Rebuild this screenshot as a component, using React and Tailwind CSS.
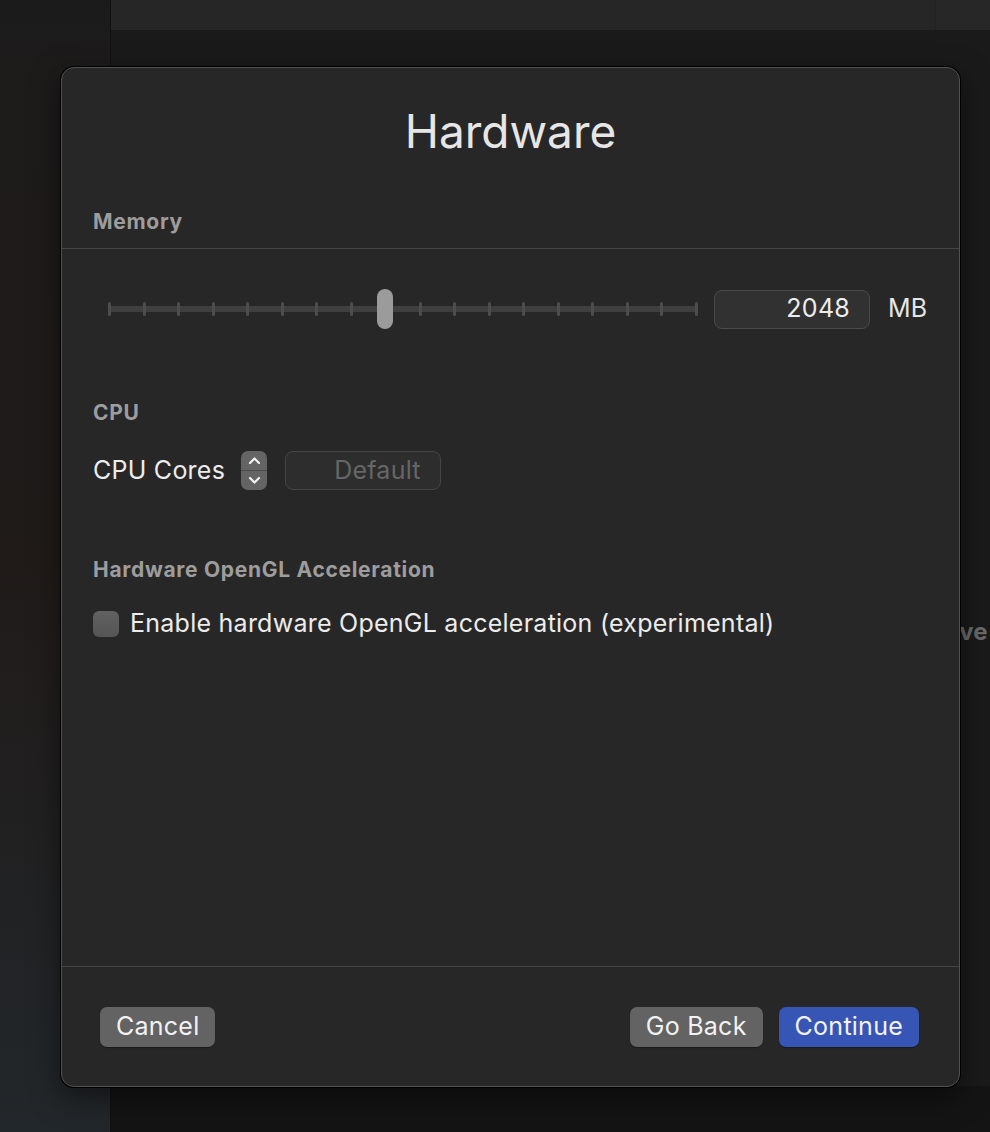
import React from 'react';

const ticks = Array.from({ length: 18 }, (_, i) => i);

const Slider = () => (
  <div className="relative h-[40px] w-[590px]">
    <div className="absolute left-[1px] right-[1px] top-[17px] h-[6px] bg-[#3f3f3f]" />
    <div className="absolute inset-x-0 top-[13px] flex justify-between">
      {ticks.map((t) => (
        <div key={t} className="h-[14px] w-[3px] rounded-full bg-[#4d4d4d]" />
      ))}
    </div>
    <div className="absolute left-[269px] top-0 h-[40px] w-[16px] rounded-full bg-[#9b9b9b]" />
  </div>
);

const Stepper = () => (
  <div className="flex h-[39px] w-[26px] flex-col overflow-hidden rounded-[7px] bg-[#646464]">
    <div className="flex flex-1 items-center justify-center border-b border-[#4c4c4c]">
      <svg width="13" height="9" viewBox="0 0 13 9" fill="none">
        <polyline points="2,7 6.5,2.5 11,7" stroke="#f2f2f2" strokeWidth="2.2" strokeLinecap="round" strokeLinejoin="round" />
      </svg>
    </div>
    <div className="flex flex-1 items-center justify-center">
      <svg width="13" height="9" viewBox="0 0 13 9" fill="none">
        <polyline points="2,2 6.5,6.5 11,2" stroke="#f2f2f2" strokeWidth="2.2" strokeLinecap="round" strokeLinejoin="round" />
      </svg>
    </div>
  </div>
);

const SectionLabel = ({ children, className = '' }) => (
  <div className={`text-[21px] font-bold tracking-[0.7px] text-[#9d9d9d] ${className}`}>{children}</div>
);

const Button = ({ children, primary }) => (
  <button
    className={`flex h-[40px] items-center rounded-[7px] px-[16px] text-[25px] tracking-[0.25px] text-[#f2f2f2] shadow-[0_1px_1px_rgba(0,0,0,0.35)] ${
      primary ? 'bg-[#3755b5]' : 'bg-[#636363]'
    }`}
  >
    {children}
  </button>
);

export default function App() {
  return (
    <div className="relative h-[1132px] w-[990px] overflow-hidden bg-[#1b1a1a] font-['Inter','Liberation_Sans',sans-serif]">
      <div className="flex h-full">
        <div className="h-full w-[111px] shrink-0 border-r border-[#111] bg-gradient-to-b from-[#1c1b1b] via-[#201b19] to-[#22272b]" />
        <div className="flex min-w-0 flex-1 flex-col">
          <div className="flex h-[30px]">
            <div className="flex-1 bg-[#262626]" />
            <div className="w-[55px] border-l border-[#222] bg-[#272727]" />
          </div>
          <div className="flex-1 overflow-hidden bg-[#1b1a1a]">
            <div className="mt-[584px] pl-[819px] text-[24px] font-bold whitespace-nowrap text-[#6a6a6a]">Save</div>
          </div>
          <div className="h-[46px] bg-[#141414]" />
        </div>
      </div>

      <div className="absolute left-[61px] top-[67px] flex h-[1020px] w-[899px] flex-col rounded-[13px] border border-[#525252] bg-[#282727] shadow-[0_0_0_1px_#000,0_10px_30px_rgba(0,0,0,0.5)]">
        <h1 className="mt-[31px] text-center text-[46px] font-normal leading-[64px] text-[#e6e6e6]">Hardware</h1>

        <SectionLabel className="mt-[45px] px-[31px] leading-[28px]">Memory</SectionLabel>
        <div className="mt-[12px] border-t border-[#454545]" />

        <div className="mt-[40px] flex items-center pl-[46px]">
          <Slider />
          <div className="ml-[16px] flex h-[39px] w-[156px] items-center justify-end rounded-[8px] border border-[#4a4a4a] bg-[#313131] pr-[19px] text-[25px] tracking-[0.25px] text-[#ededed]">
            2048
          </div>
          <span className="ml-[18px] text-[25px] tracking-[0.25px] text-[#e6e6e6]">MB</span>
        </div>

        <SectionLabel className="mt-[70px] px-[31px] leading-[28px]">CPU</SectionLabel>
        <div className="mt-[24px] flex items-center px-[31px]">
          <span className="text-[25px] tracking-[0.25px] text-[#ececec]">CPU Cores</span>
          <div className="ml-[16px]">
            <Stepper />
          </div>
          <div className="ml-[18px] flex h-[39px] w-[156px] items-center rounded-[8px] border border-[#454545] bg-[#2d2d2d] pl-[48px] text-[25px] tracking-[0.25px] text-[#666]">
            Default
          </div>
        </div>

        <SectionLabel className="mt-[66px] px-[31px] leading-[28px]">Hardware OpenGL Acceleration</SectionLabel>
        <div className="mt-[21px] flex items-center px-[31px]">
          <div className="h-[26px] w-[26px] rounded-[6px] bg-gradient-to-b from-[#616161] to-[#555]" />
          <span className="ml-[11px] text-[25px] tracking-[0.25px] text-[#ececec]">Enable hardware OpenGL acceleration (experimental)</span>
        </div>

        <div className="flex-1" />
        <div className="border-t border-[#454545]" />
        <div className="flex h-[119px] items-start justify-between pl-[38px] pr-[40px] pt-[40px]">
          <Button>Cancel</Button>
          <div className="flex gap-[16px]">
            <Button>Go Back</Button>
            <Button primary>Continue</Button>
          </div>
        </div>
      </div>
    </div>
  );
}
